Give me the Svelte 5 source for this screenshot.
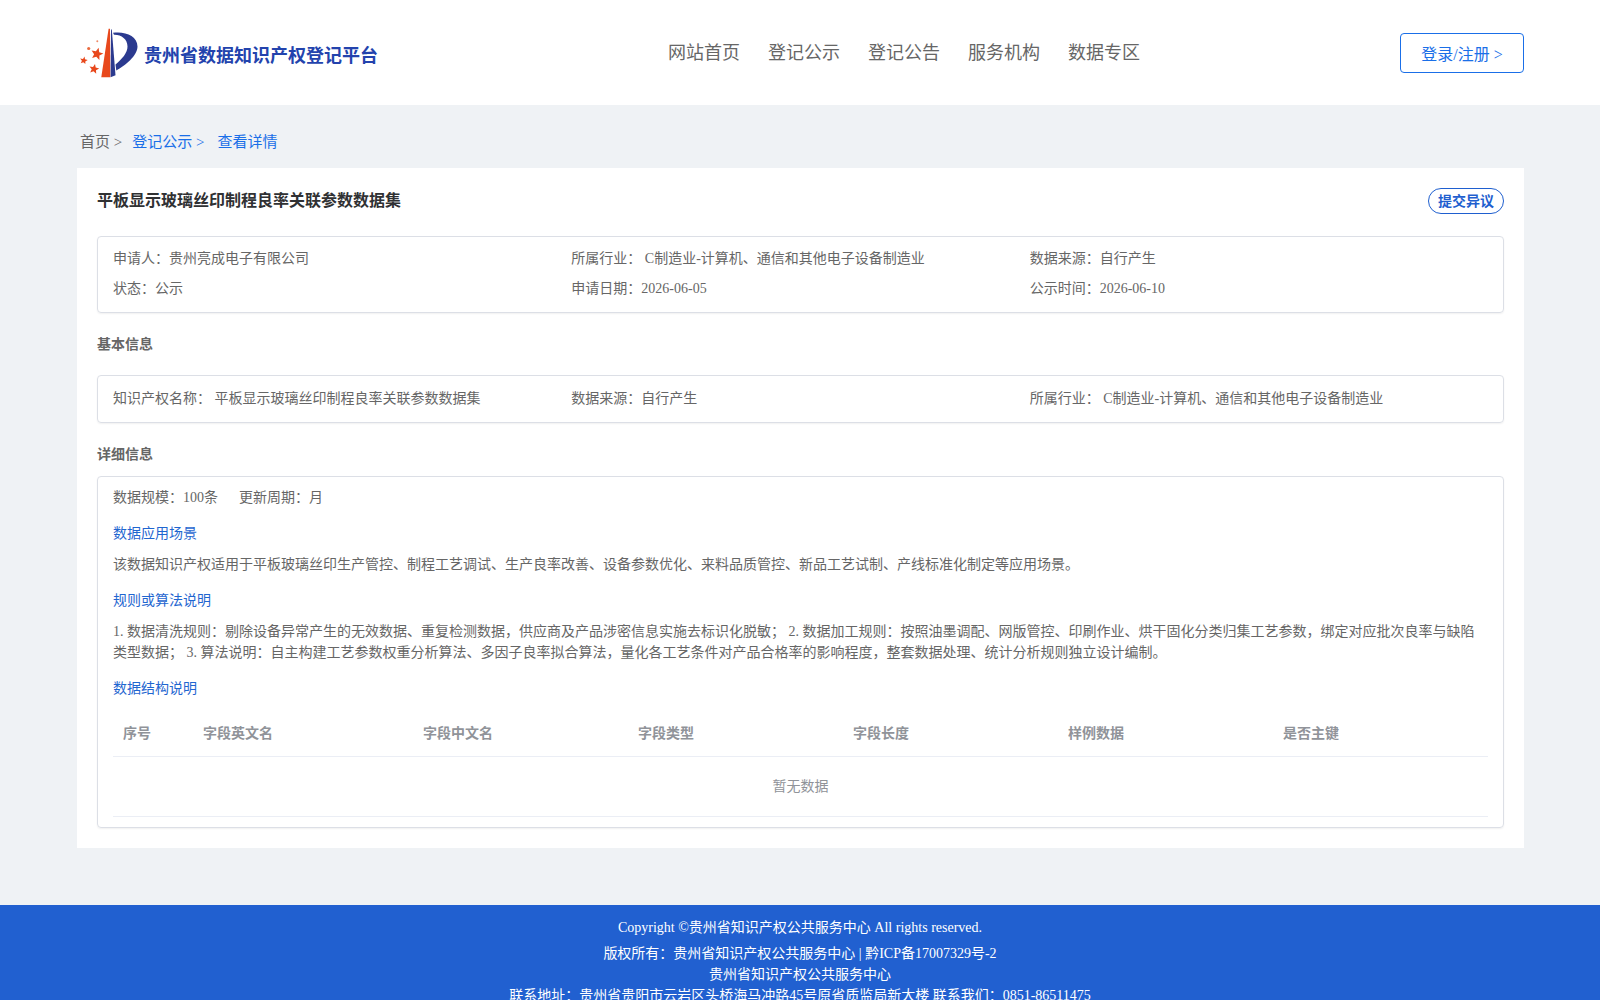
<script>
  const nav = ['网站首页', '登记公示', '登记公告', '服务机构', '数据专区'];
  const columns = [
    { label: '序号', width: 80 },
    { label: '字段英文名', width: 220 },
    { label: '字段中文名', width: 215 },
    { label: '字段类型', width: 215 },
    { label: '字段长度', width: 215 },
    { label: '样例数据', width: 215 },
    { label: '是否主键', width: 215 }
  ];
  const summary = [
    '申请人：贵州亮成电子有限公司',
    '所属行业： C制造业-计算机、通信和其他电子设备制造业',
    '数据来源：自行产生',
    '状态：公示',
    '申请日期：2026-06-05',
    '公示时间：2026-06-10'
  ];
  const basic = [
    '知识产权名称： 平板显示玻璃丝印制程良率关联参数数据集',
    '数据来源：自行产生',
    '所属行业： C制造业-计算机、通信和其他电子设备制造业'
  ];

  // five pointed star, tilted a little like the one in the logo
  function star(cx, cy, r, tilt) {
    const pts = [];
    for (let i = 0; i < 10; i++) {
      const a = (i * Math.PI) / 5 - Math.PI / 2 + tilt;
      const d = i % 2 ? r * 0.45 : r;
      pts.push((cx + d * Math.cos(a)).toFixed(1) + ',' + (cy + d * Math.sin(a)).toFixed(1));
    }
    return pts.join(' ');
  }
  const stars = [
    star(22, 31, 6.4, 0.25),
    star(8.7, 37.5, 4, 0.2),
    star(19, 46, 5.2, 0.2)
  ];
</script>

<header class="header">
  <div class="logo">
    <svg class="logo-mark" viewBox="0 0 70 60" width="70" height="60" aria-hidden="true">
      <path d="M33.6 5.8 L35 5.8 L35.3 54.2 L26.3 54.2 Z" fill="#e8481c" />
      <path d="M36 6.5 L36.8 6.5 L40.5 52.2 L35.6 54.2 Z" fill="#2b3a8f" />
      <path d="M38 9.8 C50 8 62.5 13 62.5 23.5 C62.5 33 50 42.5 41.3 47.5 L40.5 41.5 C47 36 52.5 30 52.5 23.5 C52.5 16 46 11.5 39 11.8 Z" fill="#2b3a8f" />
      {#each stars as points}
        <polygon {points} fill="#e8481c" />
      {/each}
      <circle cx="13.7" cy="25.5" r="1.6" fill="#ea6a3e" />
      <circle cx="22.3" cy="18.2" r="1" fill="#ee8a68" />
    </svg>
    <span class="logo-title">贵州省数据知识产权登记平台</span>
  </div>
  <nav class="nav">
    {#each nav as item}
      <span>{item}</span>
    {/each}
  </nav>
  <button class="login">登录/注册 &gt;</button>
</header>

<main class="page">
  <div class="crumbs">
    <span class="crumb-home">首页 &gt;</span>
    <span class="crumb-link">登记公示 &gt;</span>
    <span class="crumb-current">查看详情</span>
  </div>

  <section class="card">
    <div class="card-head">
      <h1>平板显示玻璃丝印制程良率关联参数数据集</h1>
      <button class="objection">提交异议</button>
    </div>

    <div class="box grid">
      {#each summary as cell}
        <div>{cell}</div>
      {/each}
    </div>

    <h2 class="section-a">基本信息</h2>
    <div class="box grid grid-single">
      {#each basic as cell}
        <div>{cell}</div>
      {/each}
    </div>

    <h2 class="section-b">详细信息</h2>
    <div class="box detail">
      <div class="scale">
        <span>数据规模：100条</span>
        <span>更新周期：月</span>
      </div>
      <h3>数据应用场景</h3>
      <p>该数据知识产权适用于平板玻璃丝印生产管控、制程工艺调试、生产良率改善、设备参数优化、来料品质管控、新品工艺试制、产线标准化制定等应用场景。</p>
      <h3>规则或算法说明</h3>
      <p>1. 数据清洗规则：剔除设备异常产生的无效数据、重复检测数据，供应商及产品涉密信息实施去标识化脱敏； 2. 数据加工规则：按照油墨调配、网版管控、印刷作业、烘干固化分类归集工艺参数，绑定对应批次良率与缺陷类型数据； 3. 算法说明：自主构建工艺参数权重分析算法、多因子良率拟合算法，量化各工艺条件对产品合格率的影响程度，整套数据处理、统计分析规则独立设计编制。</p>
      <h3>数据结构说明</h3>
      <div class="table">
        <div class="table-head">
          {#each columns as col}
            <div class="th" style="width: {col.width}px">{col.label}</div>
          {/each}
        </div>
        <div class="table-empty">暂无数据</div>
      </div>
    </div>
  </section>
</main>

<footer class="footer">
  <div class="copyright">Copyright ©贵州省知识产权公共服务中心 All rights reserved.</div>
  <div>版权所有：贵州省知识产权公共服务中心 | 黔ICP备17007329号-2</div>
  <div>贵州省知识产权公共服务中心</div>
  <div>联系地址：贵州省贵阳市云岩区头桥海马冲路45号原省质监局新大楼 联系我们：0851-86511475</div>
</footer>

<style>
  :global(body) {
    margin: 0;
    background: #eff2f5;
    font-family: "Liberation Serif", "Noto Sans CJK SC", serif;
    font-size: 14px;
    color: #666;
    overflow-x: hidden;
  }

  .header {
    height: 105px;
    background: #fff;
    display: flex;
    align-items: center;
    padding: 0 76px 0 77px;
  }

  .logo {
    width: 303px;
    display: flex;
    align-items: center;
    flex-shrink: 0;
  }

  .logo-mark {
    flex-shrink: 0;
    margin-left: -2px;
  }

  .logo-title {
    margin-left: -1px;
    margin-top: 3px;
    font-size: 18px;
    font-weight: 700;
    color: #2343ad;
    white-space: nowrap;
  }

  .nav {
    display: flex;
    gap: 28px;
    margin-left: 288px;
    margin-top: -3px;
    font-size: 18px;
    color: #666;
  }

  .login {
    margin-left: auto;
    width: 124px;
    height: 40px;
    border: 1px solid #1a6fe8;
    border-radius: 4px;
    background: #fff;
    color: #1a6fe8;
    font-family: inherit;
    font-size: 16px;
    padding: 0;
  }

  .page {
    padding: 25px 76px 57px 77px;
  }

  .crumbs {
    display: flex;
    padding-left: 3px;
    margin-bottom: 14px;
    font-size: 15px;
    line-height: 24px;
  }

  .crumb-home {
    color: #666;
    margin-right: 10px;
  }

  .crumb-link {
    color: #1a6fe8;
    margin-right: 13px;
  }

  .crumb-current {
    color: #1a6fe8;
  }

  .card {
    background: #fff;
    padding: 20px;
  }

  .card-head {
    display: flex;
    justify-content: space-between;
    align-items: flex-start;
    margin-bottom: 22px;
  }

  h1 {
    margin: 0;
    font-size: 16px;
    line-height: 26px;
    font-weight: 700;
    color: #303133;
  }

  .objection {
    width: 76px;
    height: 26px;
    padding: 0 0 2px;
    border: 1px solid #1f5fcf;
    border-radius: 13px;
    background: #fff;
    color: #1f5fcf;
    font-family: inherit;
    font-size: 14px;
    font-weight: 700;
  }

  .box {
    border: 1px solid #dcdfe6;
    border-radius: 4px;
    box-shadow: 0 1px 2px rgba(0, 0, 0, 0.06);
  }

  .grid {
    display: grid;
    grid-template-columns: repeat(3, 1fr);
    padding: 7px 15px 8px;
    line-height: 30px;
  }

  .grid-single {
    padding-top: 8px;
  }

  h2 {
    margin: 0;
    font-size: 14px;
    line-height: 24px;
    font-weight: 700;
    color: #666;
  }

  .section-a {
    margin: 20px 0 18px;
  }

  .section-b {
    margin: 20px 0 9px;
  }

  .detail {
    padding: 10px 15px 10px;
    line-height: 21px;
  }

  .scale {
    display: flex;
    gap: 21px;
  }

  h3 {
    margin: 15px 0 0;
    font-size: 14px;
    line-height: 21px;
    font-weight: 400;
    color: #1f66d0;
  }

  p {
    margin: 10px 0 0;
  }

  .table {
    margin-top: 11px;
    color: #909399;
  }

  .table-head {
    display: flex;
    height: 46px;
    align-items: center;
    border-bottom: 1px solid #ebeef5;
  }

  .th {
    box-sizing: border-box;
    padding-left: 10px;
    font-weight: 700;
  }

  .table-empty {
    height: 59px;
    line-height: 59px;
    text-align: center;
    border-bottom: 1px solid #ebeef5;
  }

  .footer {
    background: #2160d0;
    color: #fff;
    text-align: center;
    padding: 12px 0 12px;
    line-height: 21px;
  }

  .copyright {
    margin-bottom: 5px;
  }
</style>
